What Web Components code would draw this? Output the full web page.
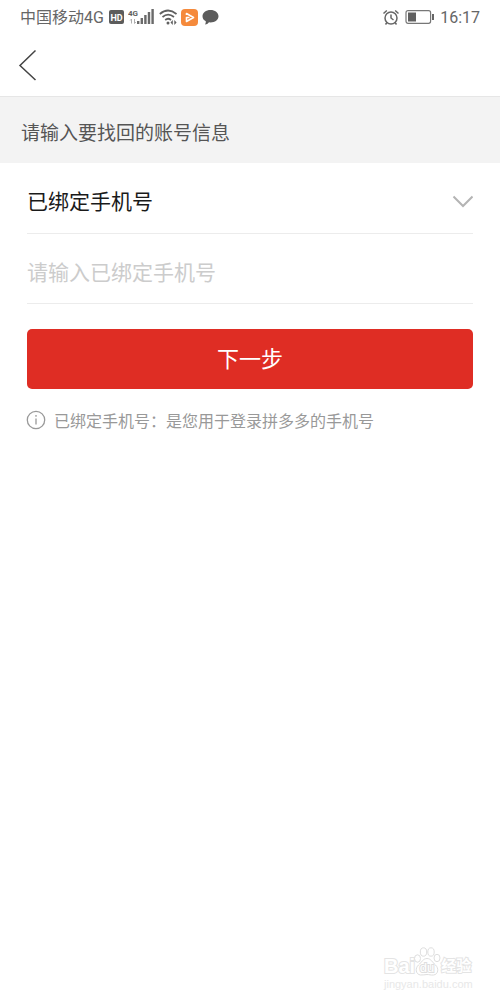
<!DOCTYPE html>
<html lang="zh-CN">
<head>
<meta charset="utf-8">
<meta name="viewport" content="width=device-width, initial-scale=1">
<title>找回账号</title>
<style>
body { margin: 0; background: #fff; font-family: Roboto, "Noto Sans CJK SC", sans-serif; }
</style>
</head>
<body>
<recover-page></recover-page>
<script>
const define = (name, html, setup) => {
  const template = document.createElement('template');
  template.innerHTML = html;
  customElements.define(name, class extends HTMLElement {
    constructor() {
      super();
      this.attachShadow({ mode: 'open' }).append(template.content.cloneNode(true));
      if (setup) setup(this.shadowRoot, this);
    }
  });
};

define('status-bar', `
<style>
:host { display: flex; justify-content: space-between; align-items: center; height: 34px; padding: 0 20px; color: #666; font-size: 16px; line-height: 24px; }
div { display: flex; align-items: center; gap: 4px; }
.right { gap: 6px; }
span, time { padding-top: 2px; }
svg { display: block; flex: none; }
text { font-family: Roboto, sans-serif; font-weight: 700; }
</style>
<div>
  <span>中国移动4G</span>
  <svg width="16" height="14" viewBox="0 0 16 14"><rect x="1" width="15" height="14" rx="2" fill="#5c5c5c"/><text x="8.500" y="10.500" text-anchor="middle" font-size="9" fill="#fff">HD</text></svg>
  <svg width="27" height="18" viewBox="0 0 27 18"><text x="0" y="8" font-size="8" fill="#606060">4G</text><path d="M3.500 15.500v-4.500M2.200 12.500l1.300-1.500M6.500 11V15.500M7.800 14L6.500 15.500" fill="none" stroke="#b0b0b0"/><path d="M9 13h2.400v3H9zm3.600-3h2.400v6h-2.400zm3.600-3h2.400v9h-2.400zm3.600-3h2.400v12h-2.400zm3.600-3h2.400v15h-2.400z" fill="#6a6a6a"/></svg>
  <svg width="18" height="18" viewBox="0 0 18 18"><g fill="none" stroke="#606060" stroke-width="1.700"><path d="M.8 6Q9 -1 17.500 6M3.500 9Q9 4.300 15 9M6.200 12Q9 9.500 12 12"/></g><circle cx="9" cy="15" r="1.500" fill="#606060"/><path d="M11.500 14.500l2.300-2.500v5zM17.600 14.500l-2.300-2.500v5z" fill="#606060"/></svg>
  <svg width="17" height="17" viewBox="0 0 17 17"><rect width="17" height="17" rx="4" fill="#f58a3c"/><path d="M5.500 6V4.500l7 4-7 4V8.500h3" fill="none" stroke="#fff" stroke-width="1.600" stroke-linejoin="round"/></svg>
  <svg width="18" height="16" viewBox="0 0 18 16"><path d="M8.500 1c4.500 0 8 2.600 8 6.200s-3.500 6.200-8 6.200l-1.500-.1Q5.500 15.500 3 15.500q1-1.200.8-3.300Q.5 10.500.5 7.200C.5 3.600 4 1 8.500 1z" fill="#5c5c5c"/></svg>
</div>
<div class="right">
  <svg width="17" height="17" viewBox="0 0 17 17" fill="none" stroke="#666" stroke-width="1.500"><circle cx="9" cy="9" r="6"/><path d="M9 5.500V9l2.500 2M1.500 4.500L4.800 1.500M16.500 4.500l-3.300-3M5 13.500l-1.500 2M13 13.500l1.500 2"/></svg>
  <svg width="29" height="14" viewBox="0 0 29 14"><rect x="1" y=".7" width="24.600" height="12.600" rx="2" fill="none" stroke="#777" stroke-width="1.200"/><path d="M3 2.500h8v9H3z" fill="#606060"/><path d="M27 4h2v6h-2z" fill="#666"/></svg>
  <time>16:17</time>
</div>`);

define('nav-bar', `
<style>
:host { display: flex; align-items: center; height: 62px; padding: 0 16px; border-bottom: 1px solid #e6e6e6; }
button { padding: 0; border: 0; background: none; }
svg { display: block; }
</style>
<button type="button" aria-label="返回"><svg width="24" height="34" viewBox="0 0 24 34" fill="none" stroke="#444" stroke-width="1.500"><path d="M19.500 2.500L4 17.500l15.500 14.500"/></svg></button>`);

define('section-title', `
<style>
:host { display: block; padding: 24px 21px 16px; background: #f3f3f3; color: #555; }
h1 { margin: 0; font-size: 19px; line-height: 26px; font-weight: 400; }
</style>
<h1><slot></slot></h1>`);

define('select-field', `
<style>
:host { display: grid; align-items: center; border-bottom: 1px solid #ececec; }
select, svg { grid-area: 1 / 1; }
select { appearance: none; width: 100%; height: 62px; padding: 0; border: 0; background: none; color: #1a1a1a; font: inherit; font-size: 21px; }
svg { justify-self: end; pointer-events: none; }
</style>
<select aria-label="找回方式"></select>
<svg width="22" height="14" viewBox="0 0 22 14" fill="none" stroke="#b4b4b4" stroke-width="2"><path d="M2.500 1.500L12 11l9.500-9.500"/></svg>`,
(root, host) => root.querySelector('select').add(new Option(host.getAttribute('value'))));

define('text-field', `
<style>
:host { display: block; border-bottom: 1px solid #ececec; }
input { display: block; box-sizing: border-box; width: 100%; height: 69px; padding: 8px 0 0; border: 0; outline: 0; background: none; color: #1a1a1a; font: inherit; font-size: 21px; }
input::placeholder { color: #ccc; opacity: 1; }
</style>
<input type="tel">`,
(root, host) => {
  const input = root.querySelector('input');
  input.placeholder = host.getAttribute('placeholder');
  input.setAttribute('aria-label', host.getAttribute('label'));
});

define('primary-button', `
<style>
:host { display: block; }
button { display: block; width: 100%; height: 60px; padding: 0 0 4px; border: 0; border-radius: 5px; background: #df2d24; color: #fff; font: inherit; font-size: 22px; }
</style>
<button type="submit"><slot></slot></button>`);

define('hint-text', `
<style>
:host { display: flex; align-items: center; gap: 8px; color: #999; }
svg { flex: none; overflow: visible; }
p { margin: 0; padding-top: 4px; font-size: 16px; line-height: 24px; }
</style>
<svg width="19" height="19" viewBox="0 0 19 19" fill="none" stroke="#999" stroke-width="1.300"><circle cx="9" cy="9" r="8.700"/><path d="M9 7.500v6M9 4v1.700"/></svg>
<p><slot></slot></p>`);

define('baidu-mark', `
<style>
:host { display: block; width: 92px; font-family: "Liberation Sans", "Noto Sans CJK SC", sans-serif; color: #fff; }
div { display: flex; align-items: flex-end; height: 32px; }
b { font-size: 20px; line-height: 24px; -webkit-text-stroke: 2px #e4e4e4; paint-order: stroke fill; }
b + svg + b { font-size: 15px; -webkit-text-stroke-width: 2px; }
svg { flex: none; margin-left: -2px; overflow: visible; }
text { paint-order: stroke fill; }
p { margin: 0; font-size: 11px; line-height: 12px; color: #e8e8e8; }
</style>
<div><b>Bai</b><svg width="28" height="32" viewBox="0 0 28 32" fill="#fff" stroke="#dedede"><ellipse cx="4.500" cy="12.500" rx="3" ry="3.700"/><ellipse cx="10.500" cy="6" rx="3.200" ry="4.200"/><ellipse cx="18" cy="6" rx="3.200" ry="4.200"/><ellipse cx="24" cy="12" rx="3" ry="3.700"/><path d="M14 12.500c4 0 5.500 4 8.500 6.500 3.500 3 3 9.500-2 10-3 .3-4-.5-6.500-.5s-4 .8-6.500.5c-5-.6-5.500-7-2-10 3-2.500 4.500-6.500 8.500-6.500z"/><text x="14" y="26" text-anchor="middle" font-size="13" stroke-width="2">du</text></svg><b>经验</b></div>
<p>jingyan.baidu.com</p>`);

define('recover-page', `
<style>
:host { display: flex; flex-direction: column; min-height: 100vh; }
form { display: flex; flex-direction: column; padding: 8px 27px 0; }
primary-button { margin-top: 25px; }
hint-text { margin-top: 17px; }
baidu-mark { margin: auto 24px 10px auto; }
</style>
<status-bar></status-bar>
<nav-bar></nav-bar>
<section-title>请输入要找回的账号信息</section-title>
<form>
  <select-field value="已绑定手机号"></select-field>
  <text-field label="手机号" placeholder="请输入已绑定手机号"></text-field>
  <primary-button>下一步</primary-button>
  <hint-text>已绑定手机号：是您用于登录拼多多的手机号</hint-text>
</form>
<baidu-mark></baidu-mark>`);
</script>
</body>
</html>
